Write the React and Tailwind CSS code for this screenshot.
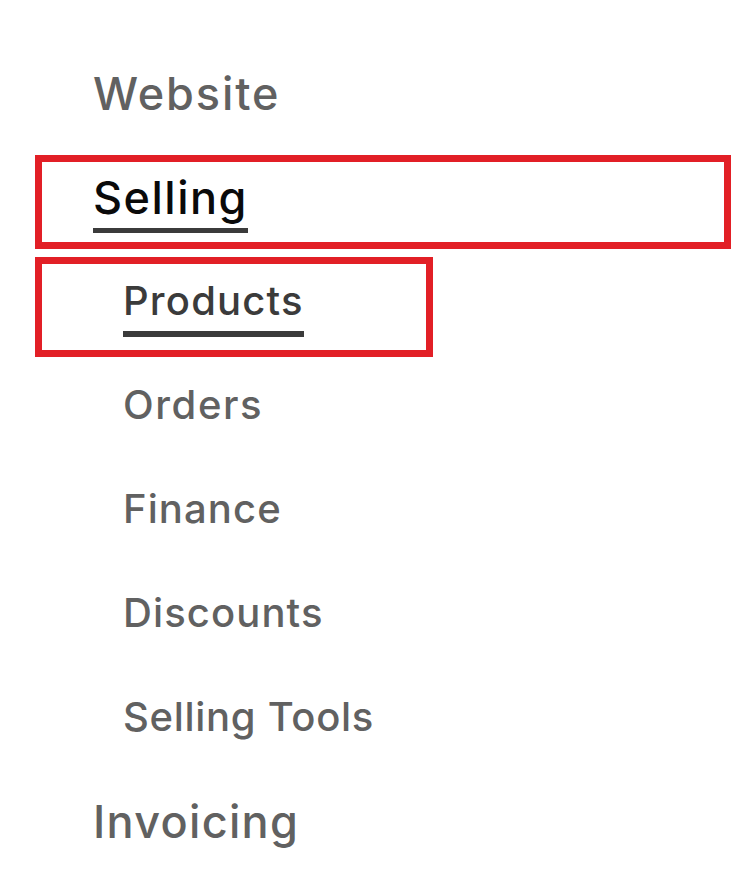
export default function App() {
  const sub = [
    { t: "Orders", c: "tracking-[1.6px]" },
    { t: "Finance", c: "tracking-[1.1px]" },
    { t: "Discounts", c: "tracking-[1.1px]" },
    { t: "Selling Tools", c: "tracking-[0.7px]" },
  ];
  return (
    <div className="relative w-[742px] h-[887px] bg-white overflow-hidden font-['Inter',sans-serif]">
      <div className="flex flex-col pt-[41px]">
        <div className="h-[104px] flex items-center pl-[93px]">
          <span className="text-[45px] leading-none font-medium tracking-[1.9px] text-[#616161]">Website</span>
        </div>
        <div className="h-[104px] flex items-center pl-[93px]">
          <span className="relative text-[45px] leading-none font-medium tracking-[1.5px] text-[#0a0a0a]">
            Selling
            <span className="absolute left-0 right-0 top-[53px] h-[5px] bg-[#3b3b3b]"></span>
          </span>
        </div>
        <div className="h-[104px] flex items-center pl-[123px]">
          <span className="relative text-[40px] leading-none font-medium tracking-[1.2px] text-[#3b3b3b]">
            Products
            <span className="absolute left-0 right-0 top-[50px] h-[6px] bg-[#3b3b3b]"></span>
          </span>
        </div>
        {sub.map((s) => (
          <div key={s.t} className="h-[104px] flex items-center pl-[123px]">
            <span className={"text-[40px] leading-none font-medium text-[#616161] " + s.c}>{s.t}</span>
          </div>
        ))}
        <div className="h-[104px] flex items-center pl-[93px]">
          <span className="text-[45px] leading-none font-medium tracking-[1.3px] text-[#616161]">Invoicing</span>
        </div>
      </div>
      <div className="absolute left-[35px] top-[155px] w-[696px] h-[94px] border-[7px] border-[#e21f26]"></div>
      <div className="absolute left-[35px] top-[257px] w-[398px] h-[100px] border-[7px] border-[#e21f26]"></div>
    </div>
  );
}
